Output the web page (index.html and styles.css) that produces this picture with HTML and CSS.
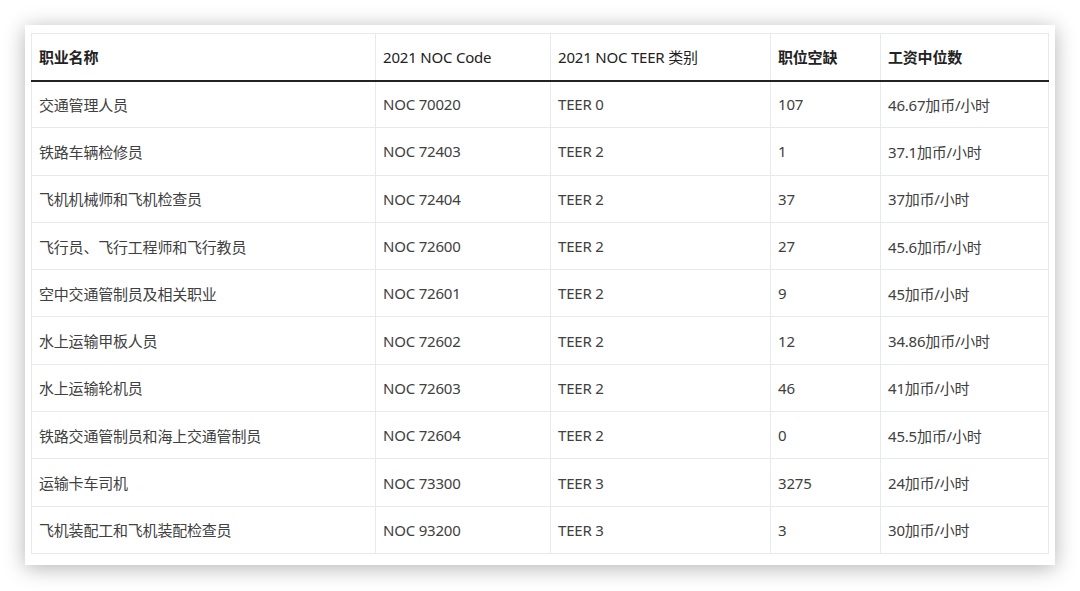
FILE: index.html
```html
<!DOCTYPE html>
<html lang="zh">
<head>
<meta charset="utf-8">
<link rel="stylesheet" href="styles.css">
</head>
<body>
<div class="card">
<table class="jobs">
<colgroup>
<col class="c1"><col class="c2"><col class="c3"><col class="c4"><col class="c5">
</colgroup>
<thead>
<tr><th class="strong">职业名称</th><th>2021 NOC Code</th><th>2021 NOC TEER 类别</th><th class="strong">职位空缺</th><th class="strong">工资中位数</th></tr>
</thead>
<tbody>
<tr><td>交通管理人员</td><td>NOC 70020</td><td>TEER 0</td><td>107</td><td>46.67加币/小时</td></tr>
<tr><td>铁路车辆检修员</td><td>NOC 72403</td><td>TEER 2</td><td>1</td><td>37.1加币/小时</td></tr>
<tr><td>飞机机械师和飞机检查员</td><td>NOC 72404</td><td>TEER 2</td><td>37</td><td>37加币/小时</td></tr>
<tr><td>飞行员、飞行工程师和飞行教员</td><td>NOC 72600</td><td>TEER 2</td><td>27</td><td>45.6加币/小时</td></tr>
<tr><td>空中交通管制员及相关职业</td><td>NOC 72601</td><td>TEER 2</td><td>9</td><td>45加币/小时</td></tr>
<tr><td>水上运输甲板人员</td><td>NOC 72602</td><td>TEER 2</td><td>12</td><td>34.86加币/小时</td></tr>
<tr><td>水上运输轮机员</td><td>NOC 72603</td><td>TEER 2</td><td>46</td><td>41加币/小时</td></tr>
<tr><td>铁路交通管制员和海上交通管制员</td><td>NOC 72604</td><td>TEER 2</td><td>0</td><td>45.5加币/小时</td></tr>
<tr><td>运输卡车司机</td><td>NOC 73300</td><td>TEER 3</td><td>3275</td><td>24加币/小时</td></tr>
<tr><td>飞机装配工和飞机装配检查员</td><td>NOC 93200</td><td>TEER 3</td><td>3</td><td>30加币/小时</td></tr>
</tbody>
</table>
</div>
</body>
</html>
```

FILE: styles.css
```css
html, body {
  margin: 0;
  padding: 0;
  background: #ffffff;
}
body {
  width: 1080px;
  height: 591px;
  overflow: hidden;
  padding-top: 25px;
  padding-left: 25px;
  box-sizing: border-box;
  font-family: "Noto Sans", "Noto Sans CJK SC", sans-serif;
  color: #333333;
}
.card {
  width: 1030px;
  box-sizing: border-box;
  background: #ffffff;
  padding: 8px 7px 11px 6px;
  box-shadow: 0 3px 20px rgba(0, 0, 0, 0.3);
}
.jobs {
  border-collapse: collapse;
  table-layout: fixed;
  width: 1017px;
  font-size: 15px;
  letter-spacing: -0.2px;
}
.c1 { width: 344px; }
.c2 { width: 175px; }
.c3 { width: 220px; }
.c4 { width: 110px; }
.c5 { width: 168px; }
.jobs th, .jobs td {
  border: 1px solid #e4eaf0;
  text-align: left;
  padding: 0 7px;
  height: 47.3px;
  box-sizing: border-box;
  white-space: nowrap;
  vertical-align: middle;
}
.jobs th {
  font-weight: 400;
  color: #222222;
  height: 47px;
  border-bottom: 2px solid #222222;
}
.jobs th.strong {
  font-weight: 700;
}
.jobs td {
  color: #404040;
}
```
